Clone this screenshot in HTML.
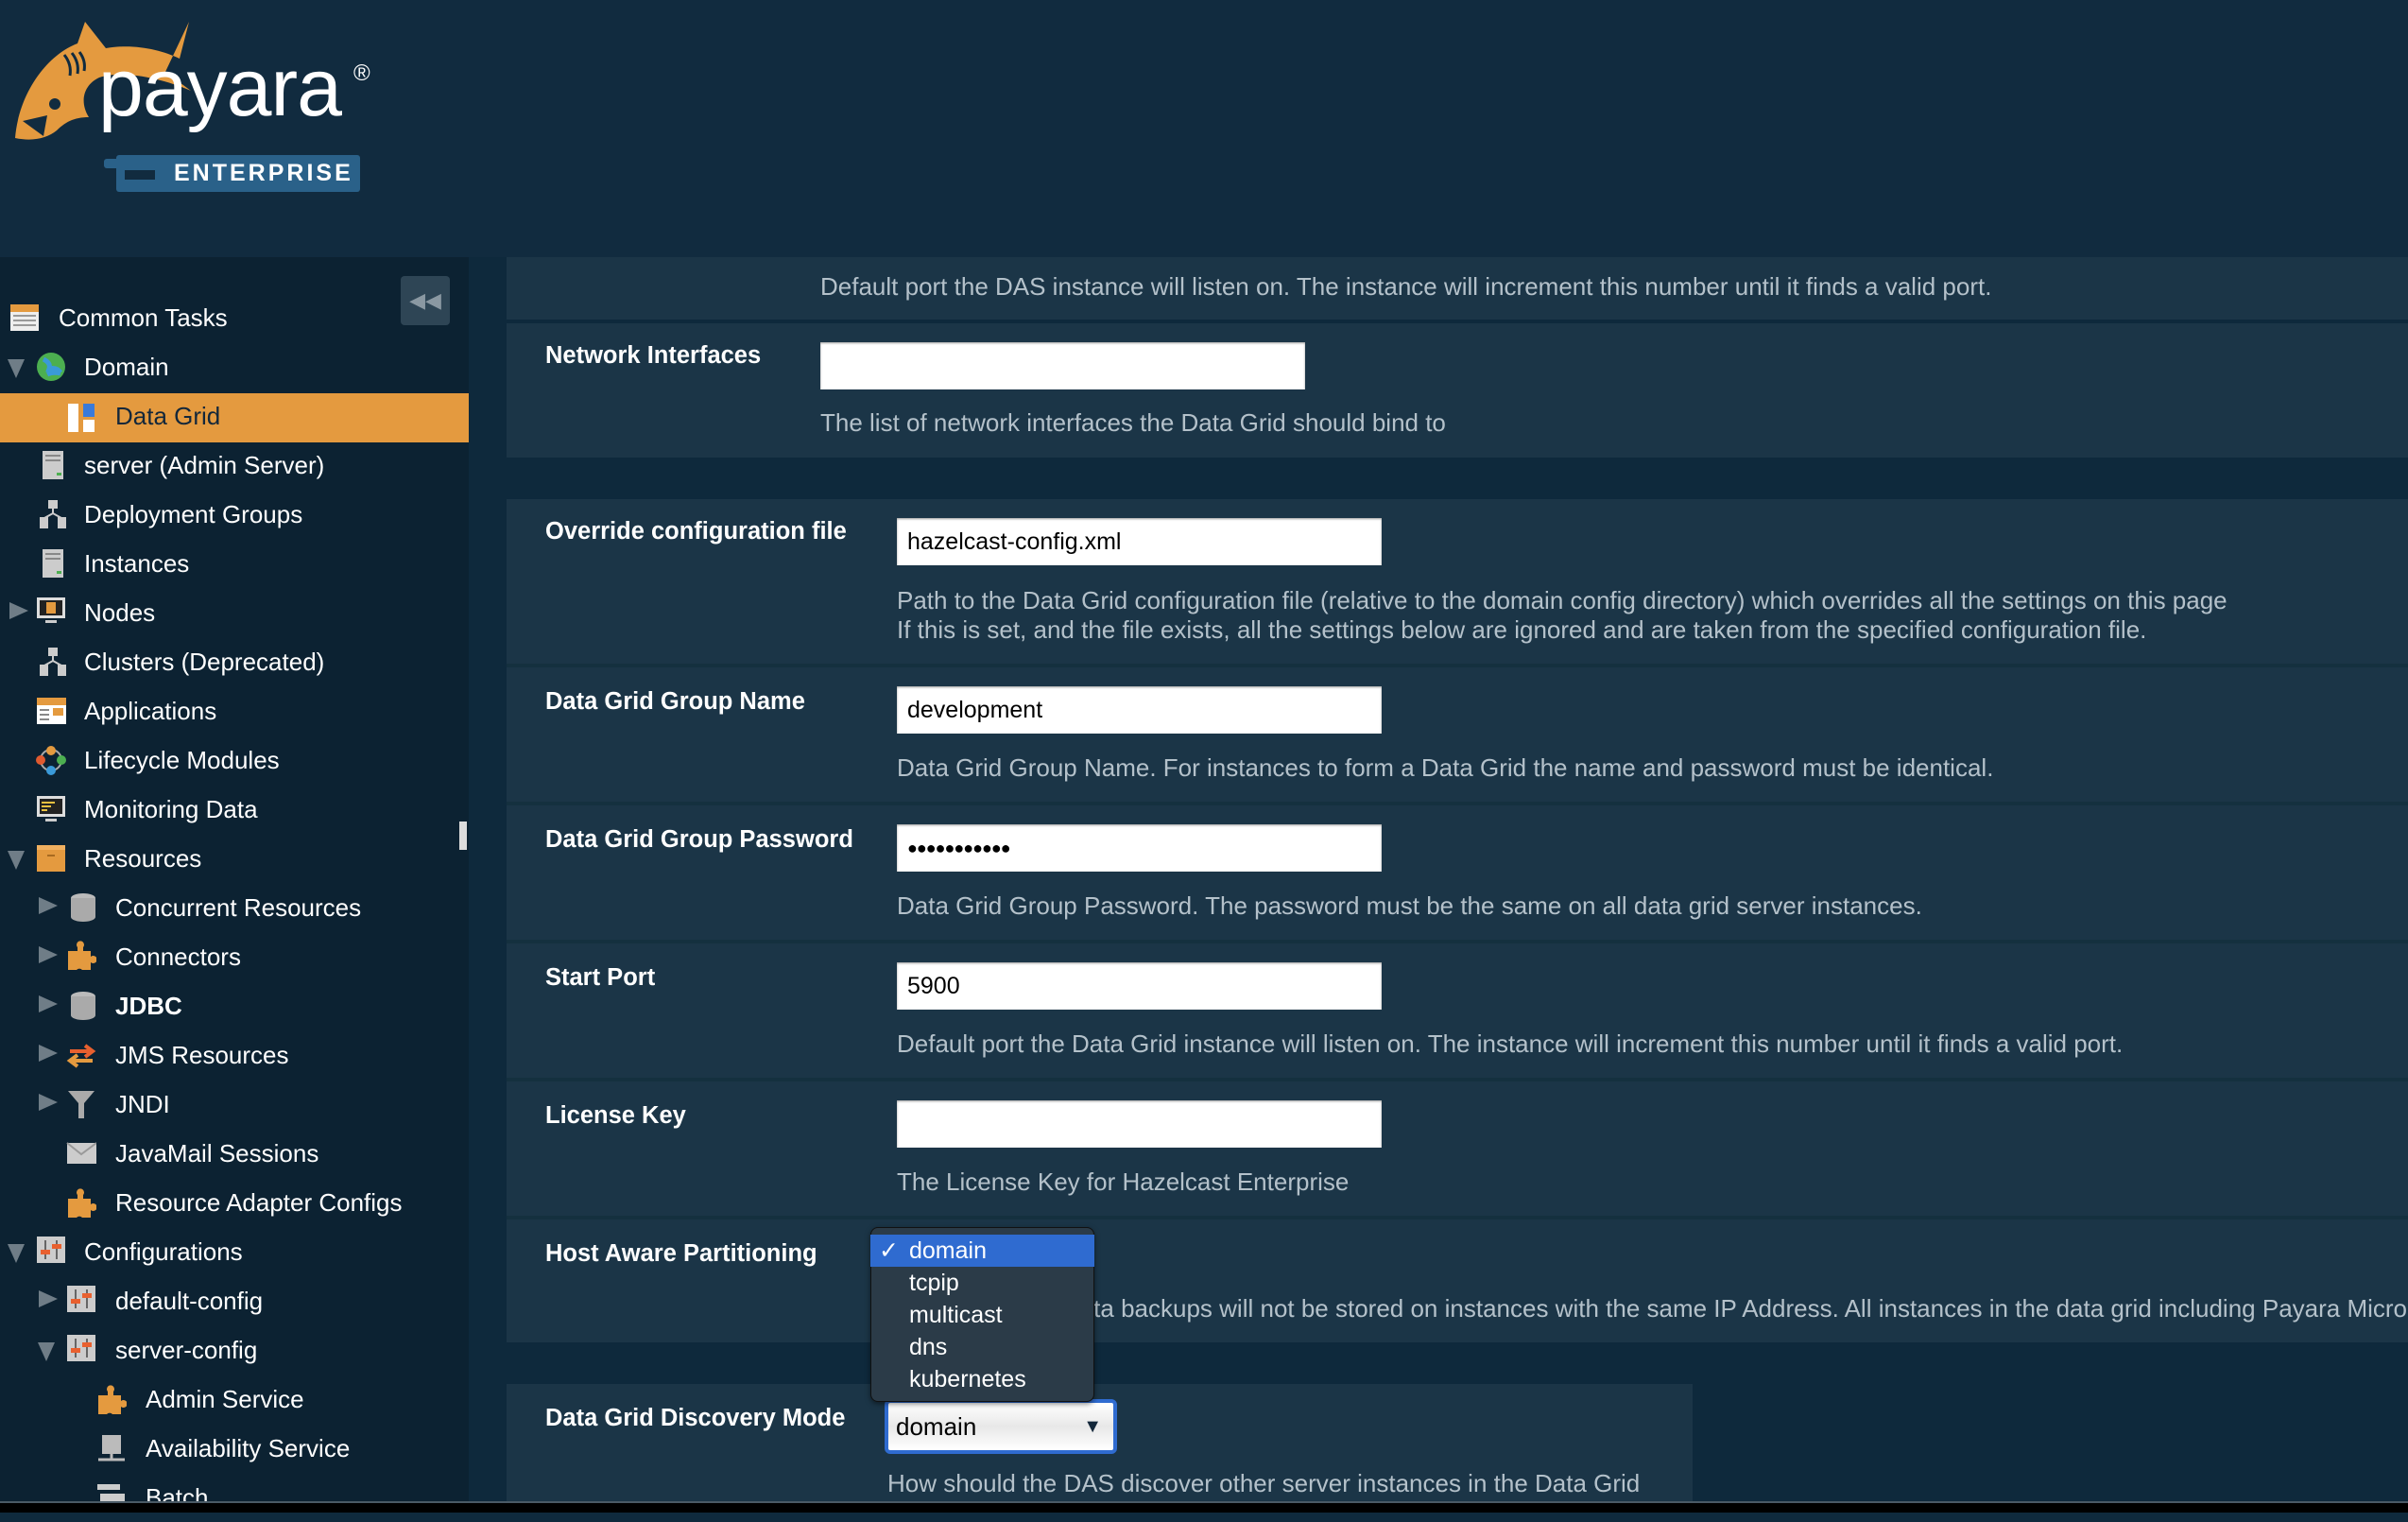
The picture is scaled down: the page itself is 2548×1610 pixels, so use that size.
<!DOCTYPE html>
<html><head><meta charset="utf-8"><style>
*{margin:0;padding:0;box-sizing:border-box}
body{width:2548px;height:1600px;overflow:hidden;background:#0f2a3d;font-family:"Liberation Sans",sans-serif;position:relative}
.hdr{position:absolute;left:0;top:0;width:2548px;height:272px;background:#112b3f}
.side{position:absolute;left:0;top:272px;width:496px;height:1318px;background:#0c2232;overflow:hidden}
.it{position:absolute;height:52px;line-height:52px;font-size:26px;color:#fff;white-space:nowrap}
.ar{position:absolute;width:0;height:0}
.ard{border-left:9px solid transparent;border-right:9px solid transparent;border-top:20px solid #6f7d87}
.arr{border-top:9px solid transparent;border-bottom:9px solid transparent;border-left:20px solid #6f7d87}
.ic{position:absolute;width:32px;height:32px}
.main{position:absolute;left:496px;top:272px;right:0;height:1318px;background:#0e293c;overflow:hidden}
.pn{position:absolute;left:40px;right:0;background:#1b3547}
.lbl{position:absolute;left:81px;font-size:25.5px;font-weight:bold;color:#fff}
.hlp{position:absolute;font-size:26px;color:#b4c1ca;white-space:nowrap}
.inp{position:absolute;background:#fff;height:50px;width:513px;font-size:25px;color:#000;padding-left:11px;line-height:50px;box-shadow:inset 0 1px 2px #999}
.sep{position:absolute;left:40px;right:0;height:4px;background:#14303f}
</style></head><body>
<div class="hdr">
<svg style="position:absolute;left:10px;top:18px" width="210" height="140" viewBox="0 0 210 140">
<path d="M6,128 C10,80 40,40 72,28 L80,5 L102,33 C130,28 160,34 180,44 L190,5 L165,58 L192,78 C160,64 118,56 95,64 C78,72 74,90 84,106 C70,106 60,110 50,120 C40,128 25,132 6,128 Z" fill="#e49a3f"/>
<circle cx="48" cy="92" r="6" fill="#112b3f"/>
<path d="M14,110 L40,104 L36,126 Z" fill="#112b3f"/>
<path d="M58,40 q8,10 6,22 M66,38 q8,10 6,22 M74,37 q7,9 5,20" stroke="#112b3f" stroke-width="3" fill="none"/>
</svg>
<div style="position:absolute;left:104px;top:44px;font-size:86px;color:#fff;letter-spacing:-1px">payara</div>
<div style="position:absolute;left:374px;top:64px;font-size:24px;color:#fff">®</div>
<div style="position:absolute;left:123px;top:164px;width:258px;height:39px;background:#2a6189;border-radius:3px"></div>
<div style="position:absolute;left:110px;top:168px;width:55px;height:10px;background:#2a6189;border-radius:3px"></div>
<div style="position:absolute;left:132px;top:180px;width:32px;height:10px;background:#112b3f"></div>
<div style="position:absolute;left:184px;top:169px;font-size:25px;font-weight:bold;color:#fff;letter-spacing:3px">ENTERPRISE</div>
</div>

<div class="side">
<div style="position:absolute;left:424px;top:20px;width:52px;height:52px;background:#2e4555;border-radius:4px;color:#8a98a2;font-size:22px;text-align:center;line-height:52px">&#9664;&#9664;</div>
<div style="position:absolute;left:486px;top:597px;width:8px;height:30px;background:#ddd"></div>
</div>
<div style="position:absolute;left:0;top:416px;width:496px;height:52px;background:#e49a3f"></div>
<svg class="ic" style="left:10px;top:320px" viewBox="0 0 32 32"><rect x="1" y="2" width="30" height="28" fill="#eee"/><rect x="1" y="2" width="30" height="8" fill="#e49a3f"/><path d="M4,14h24M4,19h24M4,24h24" stroke="#999" stroke-width="2"/></svg>
<div class="it" style="left:62px;top:310px">Common Tasks</div>
<div class="ar ard" style="left:8px;top:380px"></div>
<svg class="ic" style="left:38px;top:372px" viewBox="0 0 32 32"><circle cx="16" cy="16" r="15" fill="#4caf50"/><path d="M8,8 q8,4 6,10 q8,-2 12,4 M12,24 q6,-3 14,-1" stroke="#3a9ad9" stroke-width="5" fill="none"/></svg>
<div class="it" style="left:89px;top:362px">Domain</div>
<svg class="ic" style="left:70px;top:426px" viewBox="0 0 32 32"><rect x="2" y="1" width="11" height="30" fill="#fff"/><rect x="18" y="1" width="12" height="14" fill="#3a7ad9"/><rect x="18" y="18" width="12" height="13" fill="#fff"/></svg>
<div class="it" style="left:122px;top:414px;color:#13273a">Data Grid</div>
<svg class="ic" style="left:40px;top:476px" viewBox="0 0 32 32"><rect x="5" y="1" width="22" height="30" fill="#ccc"/><path d="M8,6h16M8,11h16" stroke="#888" stroke-width="2"/><rect x="20" y="24" width="5" height="3" fill="#4caf50"/></svg>
<div class="it" style="left:89px;top:466px">server (Admin Server)</div>
<svg class="ic" style="left:40px;top:528px" viewBox="0 0 32 32"><rect x="11" y="1" width="10" height="9" fill="#ccc"/><path d="M16,10v5M7,20l9,-5l9,5" stroke="#ccc" stroke-width="2" fill="none"/><rect x="2" y="19" width="9" height="12" fill="#ccc"/><rect x="21" y="19" width="9" height="12" fill="#ccc"/></svg>
<div class="it" style="left:89px;top:518px">Deployment Groups</div>
<svg class="ic" style="left:40px;top:580px" viewBox="0 0 32 32"><rect x="5" y="1" width="22" height="30" fill="#ccc"/><path d="M8,6h16M8,11h16" stroke="#888" stroke-width="2"/><rect x="20" y="24" width="5" height="3" fill="#4caf50"/></svg>
<div class="it" style="left:89px;top:570px">Instances</div>
<div class="ar arr" style="left:10px;top:637px"></div>
<svg class="ic" style="left:38px;top:630px" viewBox="0 0 32 32"><rect x="1" y="2" width="30" height="22" fill="#ddd"/><rect x="4" y="5" width="24" height="16" fill="#222"/><rect x="11" y="7" width="10" height="12" fill="#e49a3f"/><rect x="10" y="26" width="12" height="3" fill="#ccc"/></svg>
<div class="it" style="left:89px;top:622px">Nodes</div>
<svg class="ic" style="left:40px;top:684px" viewBox="0 0 32 32"><rect x="11" y="1" width="10" height="9" fill="#ccc"/><path d="M16,10v5M7,20l9,-5l9,5" stroke="#ccc" stroke-width="2" fill="none"/><rect x="2" y="19" width="9" height="12" fill="#ccc"/><rect x="21" y="19" width="9" height="12" fill="#ccc"/></svg>
<div class="it" style="left:89px;top:674px">Clusters (Deprecated)</div>
<svg class="ic" style="left:38px;top:736px" viewBox="0 0 32 32"><rect x="1" y="2" width="31" height="28" fill="#fff"/><rect x="1" y="2" width="31" height="8" fill="#e49a3f"/><rect x="18" y="13" width="11" height="8" fill="#e49a3f"/><path d="M4,15h10M4,20h10M4,25h10" stroke="#888" stroke-width="2"/></svg>
<div class="it" style="left:89px;top:726px">Applications</div>
<svg class="ic" style="left:38px;top:788px" viewBox="0 0 32 32"><circle cx="16" cy="16" r="11" stroke="#aaa" stroke-width="2" fill="none"/><circle cx="16" cy="6" r="5" fill="#e49a3f"/><circle cx="27" cy="16" r="5" fill="#4caf50"/><circle cx="16" cy="27" r="5" fill="#3a9ad9"/><circle cx="5" cy="16" r="5" fill="#e05a2f"/></svg>
<div class="it" style="left:89px;top:778px">Lifecycle Modules</div>
<svg class="ic" style="left:38px;top:840px" viewBox="0 0 32 32"><rect x="1" y="2" width="30" height="22" fill="#ddd"/><rect x="4" y="5" width="24" height="16" fill="#222"/><path d="M6,9h14M6,13h10M6,17h6" stroke="#e8c040" stroke-width="2"/><rect x="10" y="26" width="12" height="3" fill="#ccc"/></svg>
<div class="it" style="left:89px;top:830px">Monitoring Data</div>
<div class="ar ard" style="left:8px;top:900px"></div>
<svg class="ic" style="left:38px;top:892px" viewBox="0 0 32 32"><rect x="1" y="2" width="30" height="28" fill="#e49a3f"/><rect x="1" y="2" width="30" height="5" fill="#f0b060"/><rect x="12" y="12" width="8" height="2" fill="#a86a20"/></svg>
<div class="it" style="left:89px;top:882px">Resources</div>
<div class="ar arr" style="left:41px;top:949px"></div>
<svg class="ic" style="left:72px;top:944px" viewBox="0 0 32 32"><ellipse cx="16" cy="6" rx="13" ry="5" fill="#bbb"/><rect x="3" y="6" width="26" height="20" fill="#aaa"/><ellipse cx="16" cy="26" rx="13" ry="5" fill="#aaa"/></svg>
<div class="it" style="left:122px;top:934px">Concurrent Resources</div>
<div class="ar arr" style="left:41px;top:1001px"></div>
<svg class="ic" style="left:70px;top:994px" viewBox="0 0 32 32"><path d="M2,12h10v-4a4,4 0 1 1 6,0v4h8v6a4,4 0 1 1 0,6v8h-9a4,4 0 0 0 -6,0h-9z" fill="#e49a3f"/></svg>
<div class="it" style="left:122px;top:986px">Connectors</div>
<div class="ar arr" style="left:41px;top:1053px"></div>
<svg class="ic" style="left:72px;top:1048px" viewBox="0 0 32 32"><ellipse cx="16" cy="6" rx="13" ry="5" fill="#bbb"/><rect x="3" y="6" width="26" height="20" fill="#aaa"/><ellipse cx="16" cy="26" rx="13" ry="5" fill="#aaa"/></svg>
<div class="it" style="left:122px;top:1038px;font-weight:bold">JDBC</div>
<div class="ar arr" style="left:41px;top:1105px"></div>
<svg class="ic" style="left:70px;top:1100px" viewBox="0 0 32 32"><path d="M4,12h22M20,6l8,6l-8,6" stroke="#e8602f" stroke-width="4" fill="none"/><path d="M28,22h-22M12,16l-8,6l8,6" stroke="#e49a3f" stroke-width="4" fill="none"/></svg>
<div class="it" style="left:122px;top:1090px">JMS Resources</div>
<div class="ar arr" style="left:41px;top:1157px"></div>
<svg class="ic" style="left:70px;top:1152px" viewBox="0 0 32 32"><path d="M2,2h28l-11,13v16h-6v-16z" fill="#aaa"/></svg>
<div class="it" style="left:122px;top:1142px">JNDI</div>
<svg class="ic" style="left:70px;top:1204px" viewBox="0 0 32 32"><rect x="1" y="5" width="31" height="22" fill="#ccc"/><path d="M1,5l15,12l16,-12" stroke="#999" stroke-width="2" fill="none"/></svg>
<div class="it" style="left:122px;top:1194px">JavaMail Sessions</div>
<svg class="ic" style="left:70px;top:1256px" viewBox="0 0 32 32"><path d="M2,12h10v-4a4,4 0 1 1 6,0v4h8v6a4,4 0 1 1 0,6v8h-9a4,4 0 0 0 -6,0h-9z" fill="#e49a3f"/></svg>
<div class="it" style="left:122px;top:1246px">Resource Adapter Configs</div>
<div class="ar ard" style="left:8px;top:1316px"></div>
<svg class="ic" style="left:38px;top:1306px" viewBox="0 0 32 32"><rect x="1" y="2" width="30" height="28" fill="#ccc"/><path d="M10,6v20M22,6v20" stroke="#666" stroke-width="2"/><rect x="5" y="16" width="10" height="5" fill="#e8602f"/><rect x="17" y="10" width="10" height="5" fill="#e8602f"/></svg>
<div class="it" style="left:89px;top:1298px">Configurations</div>
<div class="ar arr" style="left:41px;top:1365px"></div>
<svg class="ic" style="left:70px;top:1358px" viewBox="0 0 32 32"><rect x="1" y="2" width="30" height="28" fill="#ccc"/><path d="M10,6v20M22,6v20" stroke="#666" stroke-width="2"/><rect x="5" y="16" width="10" height="5" fill="#e8602f"/><rect x="17" y="10" width="10" height="5" fill="#e8602f"/></svg>
<div class="it" style="left:122px;top:1350px">default-config</div>
<div class="ar ard" style="left:40px;top:1420px"></div>
<svg class="ic" style="left:70px;top:1410px" viewBox="0 0 32 32"><rect x="1" y="2" width="30" height="28" fill="#ccc"/><path d="M10,6v20M22,6v20" stroke="#666" stroke-width="2"/><rect x="5" y="16" width="10" height="5" fill="#e8602f"/><rect x="17" y="10" width="10" height="5" fill="#e8602f"/></svg>
<div class="it" style="left:122px;top:1402px">server-config</div>
<svg class="ic" style="left:102px;top:1464px" viewBox="0 0 32 32"><path d="M2,12h10v-4a4,4 0 1 1 6,0v4h8v6a4,4 0 1 1 0,6v8h-9a4,4 0 0 0 -6,0h-9z" fill="#e49a3f"/></svg>
<div class="it" style="left:154px;top:1454px">Admin Service</div>
<svg class="ic" style="left:102px;top:1516px" viewBox="0 0 32 32"><rect x="6" y="2" width="20" height="20" fill="#bbb"/><path d="M2,28h28M16,22v6" stroke="#bbb" stroke-width="3"/></svg>
<div class="it" style="left:154px;top:1506px">Availability Service</div>
<svg class="ic" style="left:102px;top:1568px" viewBox="0 0 32 32"><rect x="1" y="2" width="24" height="6" fill="#ccc"/><rect x="4" y="12" width="26" height="8" fill="#ccc"/></svg>
<div class="it" style="left:154px;top:1558px">Batch</div>

<div class="main">
<div class="pn" style="top:0;height:66px"></div>
<div class="hlp" style="left:372px;top:16px">Default port the DAS instance will listen on. The instance will increment this number until it finds a valid port.</div>
<div class="pn" style="top:70px;height:142px"></div>
<div class="lbl" style="top:90px">Network Interfaces</div>
<div class="inp" style="left:372px;top:90px"></div>
<div class="hlp" style="left:372px;top:160px">The list of network interfaces the Data Grid should bind to</div>

<div class="pn" style="top:256px;height:892px"></div>
<div class="sep" style="top:430px"></div><div class="sep" style="top:576px"></div><div class="sep" style="top:722px"></div><div class="sep" style="top:868px"></div><div class="sep" style="top:1014px"></div>
<div class="lbl" style="top:276px">Override configuration file</div>
<div class="inp" style="left:453px;top:276px">hazelcast-config.xml</div>
<div class="hlp" style="left:453px;top:348px">Path to the Data Grid configuration file (relative to the domain config directory) which overrides all the settings on this page</div>
<div class="hlp" style="left:453px;top:379px">If this is set, and the file exists, all the settings below are ignored and are taken from the specified configuration file.</div>
<div class="lbl" style="top:456px">Data Grid Group Name</div>
<div class="inp" style="left:453px;top:454px">development</div>
<div class="hlp" style="left:453px;top:525px">Data Grid Group Name. For instances to form a Data Grid the name and password must be identical.</div>
<div class="lbl" style="top:602px">Data Grid Group Password</div>
<div class="inp" style="left:453px;top:600px;font-size:18px;letter-spacing:-1px">●●●●●●●●●●●</div>
<div class="hlp" style="left:453px;top:671px">Data Grid Group Password. The password must be the same on all data grid server instances.</div>
<div class="lbl" style="top:748px">Start Port</div>
<div class="inp" style="left:453px;top:746px">5900</div>
<div class="hlp" style="left:453px;top:817px">Default port the Data Grid instance will listen on. The instance will increment this number until it finds a valid port.</div>
<div class="lbl" style="top:894px">License Key</div>
<div class="inp" style="left:453px;top:892px"></div>
<div class="hlp" style="left:453px;top:963px">The License Key for Hazelcast Enterprise</div>
<div class="lbl" style="top:1040px">Host Aware Partitioning</div>
<div class="hlp" style="left:453px;top:1097px">If enabled then data backups will not be stored on instances with the same IP Address. All instances in the data grid including Payara Micro instances must have this enabled.</div>

<div class="pn" style="top:1192px;width:1255px;right:auto;height:130px"></div>
<div class="lbl" style="top:1214px">Data Grid Discovery Mode</div>
<div style="position:absolute;left:440px;top:1208px;width:246px;height:58px;border:4px solid #2f6bd0;border-radius:6px;background:linear-gradient(#fff,#e8e8e8 50%,#fff);font-size:26px;line-height:50px;padding-left:8px;color:#000">domain<span style="position:absolute;right:12px;top:0;font-size:20px;color:#13273a">▼</span></div>
<div class="hlp" style="left:443px;top:1282px">How should the DAS discover other server instances in the Data Grid</div>
</div>

<div style="position:absolute;left:921px;top:1298px;width:237px;height:185px;background:#2b3b48;border:1px solid #111;border-radius:8px;box-shadow:0 2px 6px rgba(0,0,0,.5)"></div>
<div style="position:absolute;left:921px;top:1306px;width:237px;height:34px;background:#2f6bd0"></div>
<div style="position:absolute;left:930px;top:1306px;font-size:25px;line-height:34px;color:#fff">✓</div>
<div style="position:absolute;left:962px;top:1306px;font-size:25px;line-height:34px;color:#fff">domain<br>tcpip<br>multicast<br>dns<br>kubernetes</div>

<div style="position:absolute;left:0;top:1588px;width:2548px;height:2px;background:#4a5a66"></div>
<div style="position:absolute;left:0;top:1590px;width:2548px;height:10px;background:#000"></div>
</body></html>
